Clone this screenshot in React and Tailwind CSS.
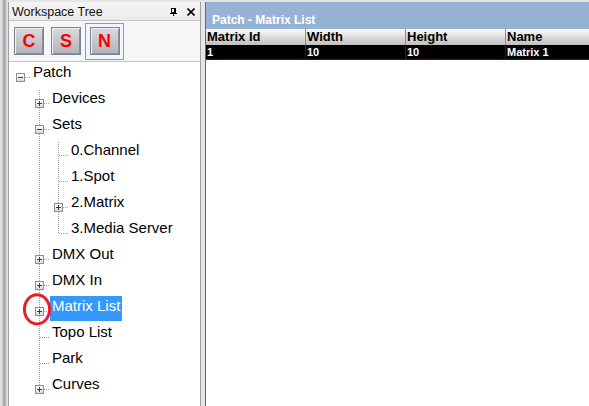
import React from "react";

const tree = [
  { label: "Patch", guides: [], kind: "root", box: "minus" },
  { label: "Devices", guides: ["blank"], kind: "tee", box: "plus" },
  { label: "Sets", guides: ["blank"], kind: "tee", box: "minus" },
  { label: "0.Channel", guides: ["blank", "pipe"], kind: "tee" },
  { label: "1.Spot", guides: ["blank", "pipe"], kind: "tee" },
  { label: "2.Matrix", guides: ["blank", "pipe"], kind: "tee", box: "plus" },
  { label: "3.Media Server", guides: ["blank", "pipe"], kind: "ell" },
  { label: "DMX Out", guides: ["blank"], kind: "tee", box: "plus" },
  { label: "DMX In", guides: ["blank"], kind: "tee", box: "plus" },
  { label: "Matrix List", guides: ["blank"], kind: "tee", box: "plus", selected: true },
  { label: "Topo List", guides: ["blank"], kind: "tee" },
  { label: "Park", guides: ["blank"], kind: "tee" },
  { label: "Curves", guides: ["blank"], kind: "ell", box: "plus" },
];

const DOT = "#a0a0a0";

function Cell({ type, box }) {
  return (
    <svg width="19" height="26" className="shrink-0 block" shapeRendering="crispEdges">
      {(type === "pipe" || type === "tee") && (
        <line x1="9.5" y1="0" x2="9.5" y2="26" stroke={DOT} strokeDasharray="1 1" />
      )}
      {type === "ell" && (
        <line x1="9.5" y1="0" x2="9.5" y2="14" stroke={DOT} strokeDasharray="1 1" />
      )}
      {(type === "tee" || type === "ell" || type === "root") && (
        <line x1="10" y1="13.5" x2="20" y2="13.5" stroke={DOT} strokeDasharray="1 1" />
      )}
      {box && (
        <g>
          <defs>
            <linearGradient id="bx" x1="0" y1="0" x2="0" y2="1">
              <stop offset="0" stopColor="#ffffff" />
              <stop offset="1" stopColor="#d8d8d8" />
            </linearGradient>
          </defs>
          <rect x="5.5" y="9.5" width="8" height="8" fill="url(#bx)" stroke="#8e8f8f" />
          <line x1="7" y1="13.5" x2="12" y2="13.5" stroke="#1d3d8f" />
          {box === "plus" && <line x1="9.5" y1="11" x2="9.5" y2="16" stroke="#1d3d8f" />}
        </g>
      )}
    </svg>
  );
}

function TreeRow({ item }) {
  return (
    <div className="flex h-[26px] items-start">
      {item.guides.map((g, i) => (
        <Cell key={i} type={g} />
      ))}
      <Cell type={item.kind} box={item.box} />
      <span
        className={
          "ml-[1px] -mt-[2px] px-[2px] pt-[2px] pb-[8px] text-[15px] leading-[15px] whitespace-nowrap " +
          (item.selected ? "bg-[#3399ff] text-white" : "text-black")
        }
      >
        {item.label}
      </span>
    </div>
  );
}

function ToolButton({ letter }) {
  return (
    <div className="w-[30px] h-[28px] border border-[#7b8394] bg-[linear-gradient(#d9d9df,#b3b3bb)] shadow-[inset_1px_1px_0_#f0f0f4,inset_-1px_-1px_0_#8e8e98] flex items-center justify-center text-[18px] font-bold text-[#ff0000] leading-none">
      {letter}
    </div>
  );
}

export default function App() {
  return (
    <div
      className="relative w-[589px] h-[406px] overflow-hidden flex pt-[2px] bg-[#e4e4e4]"
      style={{ fontFamily: '"Liberation Sans", Arial, sans-serif' }}
    >
      {/* left blurred stripe */}
      <div className="w-[8px] -mt-[2px] shrink-0 bg-[linear-gradient(to_right,#e2e2e2_0px,#dcdcdc_2px,#9e9e9e_4px,#b0b0b0_5px,#e0e0e0_7px)]" />

      {/* Workspace tree panel */}
      <div className="w-[193px] shrink-0 flex flex-col border-l border-r border-[#a0a0a0] bg-white">
        <div className="h-[19px] shrink-0 flex items-start justify-between border-b border-[#c6c6c6] bg-[linear-gradient(#f4f4f4,#ececec)]">
          <span className="pl-[3px] pt-[3px] text-[12.5px] leading-[14px] text-[#111]">Workspace Tree</span>
          <div className="flex items-center gap-[9px] pr-[5px] pt-[6px]">
            <svg width="8" height="8" shapeRendering="crispEdges">
              <rect x="1.5" y="0.5" width="4" height="4" fill="none" stroke="#000" />
              <line x1="4.5" y1="0" x2="4.5" y2="5" stroke="#000" />
              <line x1="0" y1="5.5" x2="7" y2="5.5" stroke="#000" />
              <line x1="3.5" y1="5" x2="3.5" y2="8" stroke="#000" />
            </svg>
            <svg width="8" height="8">
              <path d="M0.5 0.5 L7.5 7.5 M7.5 0.5 L0.5 7.5" stroke="#000" strokeWidth="1.6" />
            </svg>
          </div>
        </div>
        <div className="h-[41px] shrink-0 flex items-center pl-[5px] border-b border-[#c4c4c4] bg-[#f7f7f7]">
          <ToolButton letter="C" />
          <div className="w-[7px]" />
          <ToolButton letter="S" />
          <div className="w-[4px]" />
          <div className="w-[39px] h-[37px] border border-[#5aa7f0] bg-[#f0f6fc] flex items-center justify-center">
            <ToolButton letter="N" />
          </div>
        </div>
        <div className="flex-1 pt-[2px] pl-[2px] bg-white">
          {tree.map((item, i) => (
            <TreeRow key={i} item={item} />
          ))}
        </div>
      </div>

      {/* gap */}
      <div className="w-[4px] shrink-0 bg-[#e6e6e6]" />

      {/* Matrix list panel */}
      <div className="flex-1 flex flex-col border-l border-[#6a6a6a] bg-white">
        <div className="h-[27px] shrink-0 bg-[#97b3d4] pl-[6px] pt-[5px]">
          <span className="text-[12px] leading-[14px] font-bold text-white">Patch - Matrix List</span>
        </div>
        <div className="h-[16px] shrink-0 flex bg-[linear-gradient(#fbfbfb,#bfbfbf)] text-[13px] leading-[16px] font-bold text-black">
          {["Matrix Id", "Width", "Height"].map((h) => (
            <div key={h} className="w-[100px] shrink-0 pl-[1px] border-r border-[#8a8a8a] whitespace-nowrap">
              {h}
            </div>
          ))}
          <div className="flex-1 pl-[1px] whitespace-nowrap">Name</div>
        </div>
        <div className="h-[15px] shrink-0 flex bg-black border-b border-[#7a0000] text-[11px] leading-[14px] font-bold text-white">
          {["1", "10", "10"].map((v, i) => (
            <div key={i} className="w-[100px] shrink-0 pl-[1px] border-r border-[#7a0000] whitespace-nowrap">
              {v}
            </div>
          ))}
          <div className="flex-1 pl-[1px] whitespace-nowrap">Matrix 1</div>
        </div>
        <div className="flex-1 bg-white" />
      </div>

      {/* red annotation circle */}
      <svg className="absolute left-[21px] top-[292px] pointer-events-none" width="32" height="35">
        <ellipse cx="16" cy="17.3" rx="12.6" ry="14.6" fill="none" stroke="#ec1c24" strokeWidth="3" />
      </svg>
    </div>
  );
}
